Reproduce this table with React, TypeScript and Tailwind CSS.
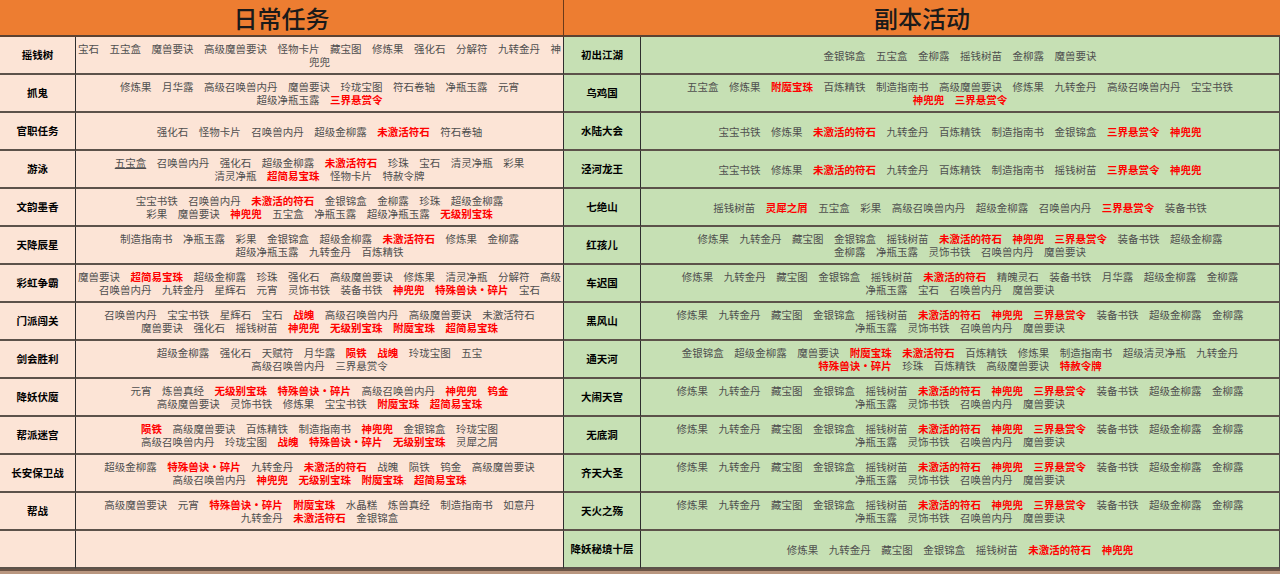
type Row = { name: string; lines: string[] };

// "*" = red bold item, "_" = underlined item
const daily: Row[] = [
  { name: '摇钱树', lines: ['宝石 五宝盒 魔兽要诀 高级魔兽要诀 怪物卡片 藏宝图 修炼果 强化石 分解符 九转金丹 神', '兜兜'] },
  { name: '抓鬼', lines: ['修炼果 月华露 高级召唤兽内丹 魔兽要诀 玲珑宝图 符石卷轴 净瓶玉露 元宵', '超级净瓶玉露 *三界悬赏令'] },
  { name: '官职任务', lines: ['强化石 怪物卡片 召唤兽内丹 超级金柳露 *未激活符石 符石卷轴'] },
  { name: '游泳', lines: ['_五宝盒 召唤兽内丹 强化石 超级金柳露 *未激活符石 珍珠 宝石 清灵净瓶 彩果', '清灵净瓶 *超简易宝珠 怪物卡片 特赦令牌'] },
  { name: '文韵墨香', lines: ['宝宝书铁 召唤兽内丹 *未激活的符石 金银锦盒 金柳露 珍珠 超级金柳露', '彩果 魔兽要诀 *神兜兜 五宝盒 净瓶玉露 超级净瓶玉露 *无级别宝珠'] },
  { name: '天降辰星', lines: ['制造指南书 净瓶玉露 彩果 金银锦盒 超级金柳露 *未激活符石 修炼果 金柳露', '超级净瓶玉露 九转金丹 百炼精铁'] },
  { name: '彩虹争霸', lines: ['魔兽要诀 *超简易宝珠 超级金柳露 珍珠 强化石 高级魔兽要诀 修炼果 清灵净瓶 分解符 高级', '召唤兽内丹 九转金丹 星辉石 元宵 灵饰书铁 装备书铁 *神兜兜 *特殊兽诀・碎片 宝石'] },
  { name: '门派闯关', lines: ['召唤兽内丹 宝宝书铁 星辉石 宝石 *战魄 高级召唤兽内丹 高级魔兽要诀 未激活符石', '魔兽要诀 强化石 摇钱树苗 *神兜兜 *无级别宝珠 *附魔宝珠 *超简易宝珠'] },
  { name: '剑会胜利', lines: ['超级金柳露 强化石 天赋符 月华露 *陨铁 *战魄 玲珑宝图 五宝', '高级召唤兽内丹 三界悬赏令'] },
  { name: '降妖伏魔', lines: ['元宵 炼兽真经 *无级别宝珠 *特殊兽诀・碎片 高级召唤兽内丹 *神兜兜 *钨金', '高级魔兽要诀 灵饰书铁 修炼果 宝宝书铁 *附魔宝珠 *超简易宝珠'] },
  { name: '帮派迷宫', lines: ['*陨铁 高级魔兽要诀 百炼精铁 制造指南书 *神兜兜 金银锦盒 玲珑宝图', '高级召唤兽内丹 玲珑宝图 *战魄 *特殊兽诀・碎片 *无级别宝珠 灵犀之屑'] },
  { name: '长安保卫战', lines: ['超级金柳露 *特殊兽诀・碎片 九转金丹 *未激活的符石 战魄 陨铁 钨金 高级魔兽要诀', '高级召唤兽内丹 *神兜兜 *无级别宝珠 *附魔宝珠 *超简易宝珠'] },
  { name: '帮战', lines: ['高级魔兽要诀 元宵 *特殊兽诀・碎片 *附魔宝珠 水晶糕 炼兽真经 制造指南书 如意丹', '九转金丹 *未激活符石 金银锦盒'] },
  { name: '', lines: [] },
];

const common = [
  '修炼果 九转金丹 藏宝图 金银锦盒 摇钱树苗 *未激活的符石 *神兜兜 *三界悬赏令 装备书铁 超级金柳露 金柳露',
  '净瓶玉露 灵饰书铁 召唤兽内丹 魔兽要诀',
];

const dungeon: Row[] = [
  { name: '初出江湖', lines: ['金银锦盒 五宝盒 金柳露 摇钱树苗 金柳露 魔兽要诀'] },
  { name: '乌鸡国', lines: ['五宝盒 修炼果 *附魔宝珠 百炼精铁 制造指南书 高级魔兽要诀 修炼果 九转金丹 高级召唤兽内丹 宝宝书铁', '*神兜兜 *三界悬赏令'] },
  { name: '水陆大会', lines: ['宝宝书铁 修炼果 *未激活的符石 九转金丹 百炼精铁 制造指南书 金银锦盒 *三界悬赏令 *神兜兜'] },
  { name: '泾河龙王', lines: ['宝宝书铁 修炼果 *未激活的符石 九转金丹 百炼精铁 制造指南书 摇钱树苗 *三界悬赏令 *神兜兜'] },
  { name: '七绝山', lines: ['摇钱树苗 *灵犀之屑 五宝盒 彩果 高级召唤兽内丹 超级金柳露 召唤兽内丹 *三界悬赏令 装备书铁'] },
  { name: '红孩儿', lines: ['修炼果 九转金丹 藏宝图 金银锦盒 摇钱树苗 *未激活的符石 *神兜兜 *三界悬赏令 装备书铁 超级金柳露', '金柳露 净瓶玉露 灵饰书铁 召唤兽内丹 魔兽要诀'] },
  { name: '车迟国', lines: ['修炼果 九转金丹 藏宝图 金银锦盒 摇钱树苗 *未激活的符石 精魄灵石 装备书铁 月华露 超级金柳露 金柳露', '净瓶玉露 宝石 召唤兽内丹 魔兽要诀'] },
  { name: '黑风山', lines: common },
  { name: '通天河', lines: ['金银锦盒 超级金柳露 魔兽要诀 *附魔宝珠 *未激活符石 百炼精铁 修炼果 制造指南书 超级清灵净瓶 九转金丹', '*特殊兽诀・碎片 珍珠 百炼精铁 高级魔兽要诀 *特赦令牌'] },
  { name: '大闹天宫', lines: common },
  { name: '无底洞', lines: common },
  { name: '齐天大圣', lines: common },
  { name: '天火之殇', lines: common },
  { name: '降妖秘境十层', lines: ['修炼果 九转金丹 藏宝图 金银锦盒 摇钱树苗 *未激活的符石 *神兜兜'] },
];

function Items({ lines }: { lines: string[] }) {
  return (
    <div className="flex flex-col items-center leading-[13px]">
      {lines.map((line, i) => (
        <div key={i} className="flex gap-[10.5px] whitespace-nowrap">
          {line.split(' ').map((w, j) => {
            if (w.startsWith('*')) {
              return (
                <span key={j} className="font-bold text-[#ff0000]">
                  {w.slice(1)}
                </span>
              );
            }
            if (w.startsWith('_')) {
              return (
                <span key={j} className="underline">
                  {w.slice(1)}
                </span>
              );
            }
            return <span key={j}>{w}</span>;
          })}
        </div>
      ))}
    </div>
  );
}

export default function App() {
  return (
    <div className="w-[1280px] h-[574px] overflow-hidden bg-[#b99780] font-['Noto_Sans_CJK_SC',sans-serif]">
      <div className="grid grid-cols-[76px_488px_77px_1fr] grid-rows-[37px_repeat(14,38px)] border-b-2 border-[#6b5446]">
        <div className="col-span-2 flex items-center justify-center bg-[#ed7d31] border-r border-b-2 border-r-[#6a3a1a] border-b-[#5c4232] text-[24px] font-medium text-[#1a1a1a]">
          日常任务
        </div>
        <div className="col-span-2 flex items-center justify-center bg-[#ed7d31] border-b-2 border-[#5c4232] text-[24px] font-medium text-[#1a1a1a]">
          副本活动
        </div>

        {daily.map((d, i) => {
          const r = dungeon[i];
          return (
            <div key={i} className="contents">
              <div className="flex items-center justify-center bg-[#fce4d6] border-r border-b-2 border-r-[#2e2e2e] border-b-[#5c524a] text-[10.5px] font-bold text-black">
                {d.name}
              </div>
              <div className="flex items-center justify-center bg-[#fce4d6] border-r border-b-2 border-r-[#2e2e2e] border-b-[#5c524a] text-[10.5px] text-[#4f4f4f]">
                <Items lines={d.lines} />
              </div>
              <div className="flex items-center justify-center bg-[#c6e0b4] border-r border-b-2 border-r-[#2e2e2e] border-b-[#5c524a] text-[10.5px] font-bold text-black whitespace-nowrap">
                {r.name}
              </div>
              <div className="flex items-center justify-center bg-[#c6e0b4] border-r border-b-2 border-r-[#4a4a4a] border-b-[#5c524a] text-[10.5px] text-[#4f4f4f]">
                <Items lines={r.lines} />
              </div>
            </div>
          );
        })}
      </div>
    </div>
  );
}
